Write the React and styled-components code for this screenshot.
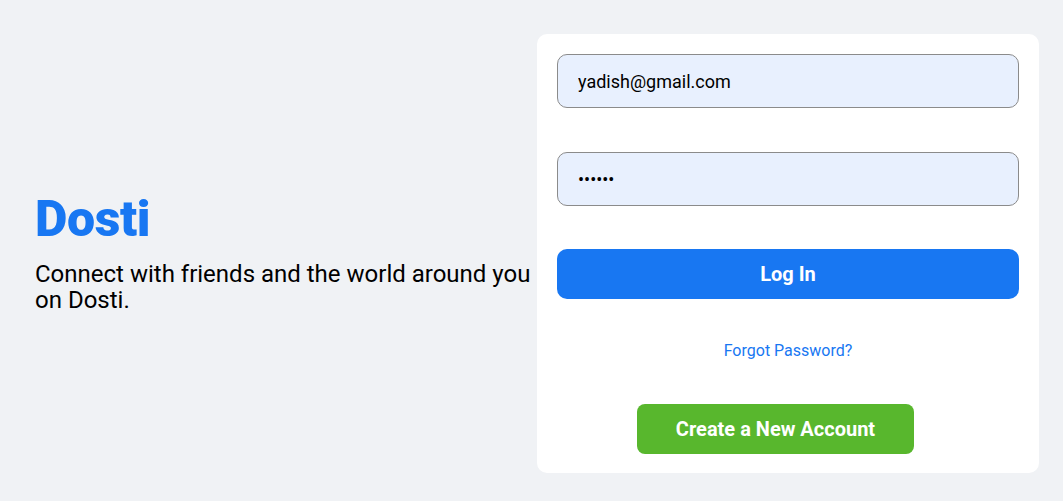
import React from 'react'
import styled, { createGlobalStyle } from 'styled-components'

const GlobalStyle = createGlobalStyle`
  * { box-sizing: border-box; }
  body {
    margin: 0;
    background-color: #f0f2f5;
    font-family: Roboto, "Liberation Sans", Arial, sans-serif;
  }
`

const App = () => {
  return (
    <>
      <GlobalStyle />
      <Page>
        <Left>
          <Logo>Dosti</Logo>
          <Tagline>Connect with friends and the world around you on Dosti.</Tagline>
        </Left>
        <Card>
          <Input type="email" defaultValue="yadish@gmail.com" $gap={44} />
          <Input type="password" defaultValue="123456" $gap={43} />
          <LoginButton>Log In</LoginButton>
          <Forgot href="#">Forgot Password?</Forgot>
          <CreateButton>Create a New Account</CreateButton>
        </Card>
      </Page>
    </>
  )
}

const Page = styled.div`
  height: 501px;
  display: flex;
  align-items: center;
  padding: 6px 24px 0 35px;
`
const Left = styled.div`
  width: 502px;
  display: flex;
  flex-direction: column;
  margin-top: -3px;
`
const Logo = styled.h1`
  margin: 0;
  font-size: 50px;
  font-weight: 900;
  color: #1877f2;
  line-height: 56px;
  letter-spacing: -0.4px;
`
const Tagline = styled.p`
  margin: 14px 0 0;
  font-size: 24px;
  line-height: 26px;
  color: #000;
  width: 500px;
`
const Card = styled.div`
  width: 502px;
  height: 439px;
  background: #fff;
  border-radius: 10px;
  padding: 20px;
  display: flex;
  flex-direction: column;
  align-items: center;
`
const Input = styled.input`
  width: 100%;
  height: 54px;
  flex-shrink: 0;
  border: 1px solid #8b8b8b;
  border-radius: 10px;
  background: #e8f0fe;
  padding: 0 20px;
  font-family: Roboto, "Liberation Sans", Arial, sans-serif;
  font-size: 18px;
  color: #000;
  outline: none;
  margin-bottom: ${props => props.$gap}px;
`
const LoginButton = styled.button`
  width: 100%;
  height: 50px;
  flex-shrink: 0;
  border: none;
  border-radius: 10px;
  background: #1877f2;
  color: #fff;
  font-family: Roboto, "Liberation Sans", Arial, sans-serif;
  font-size: 20px;
  font-weight: 700;
`
const Forgot = styled.a`
  margin-top: 43px;
  font-size: 16px;
  color: #1877f2;
  text-decoration: none;
  line-height: 18px;
`
const CreateButton = styled.button`
  align-self: flex-start;
  flex-shrink: 0;
  margin: 44px 0 0 80px;
  width: 277px;
  height: 50px;
  border: none;
  border-radius: 8px;
  background: #58b72d;
  color: #fff;
  font-family: Roboto, "Liberation Sans", Arial, sans-serif;
  font-size: 20px;
  font-weight: 700;
`

export default App
